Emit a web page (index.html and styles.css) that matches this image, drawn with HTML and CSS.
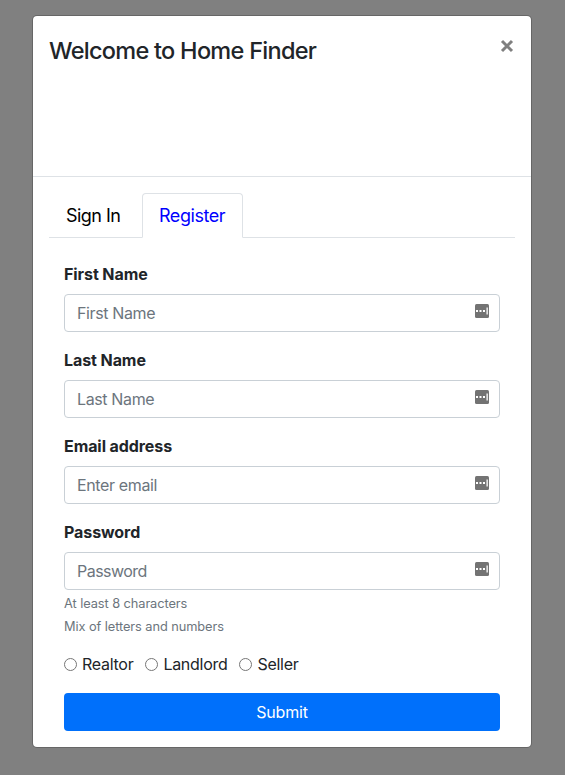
FILE: index.html
```html
<!DOCTYPE html>
<html lang="en">
<head>
<meta charset="utf-8">
<title>Home Finder</title>
<link rel="stylesheet" href="styles.css">
</head>
<body>
<main class="modal">
  <header class="modal-header">
    <h1 class="title">Welcome to Home Finder</h1>
    <button class="close" type="button"><svg width="12" height="12" viewBox="0 0 12 12"><path d="M1 1 11 11M11 1 1 11"/></svg></button>
  </header>
  <section class="modal-body">
    <nav class="tabs"><a class="tab">Sign In</a><a class="tab active">Register</a></nav>
    <form class="form">
      <label class="label" for="first">First Name</label>
      <div class="field"><input id="first" class="input" placeholder="First Name"><svg class="key" viewBox="0 0 14 14"><rect width="14" height="14" rx="1.5"/><path d="M1 6h2v2H1zM4.5 6h2v2h-2zM8 6h2v2H8zM11.5 3.5h1.3v7h-1.3z"/></svg></div>
      <label class="label" for="last">Last Name</label>
      <div class="field"><input id="last" class="input" placeholder="Last Name"><svg class="key" viewBox="0 0 14 14"><rect width="14" height="14" rx="1.5"/><path d="M1 6h2v2H1zM4.5 6h2v2h-2zM8 6h2v2H8zM11.5 3.5h1.3v7h-1.3z"/></svg></div>
      <label class="label" for="email">Email address</label>
      <div class="field"><input id="email" class="input" placeholder="Enter email"><svg class="key" viewBox="0 0 14 14"><rect width="14" height="14" rx="1.5"/><path d="M1 6h2v2H1zM4.5 6h2v2h-2zM8 6h2v2H8zM11.5 3.5h1.3v7h-1.3z"/></svg></div>
      <label class="label" for="pass">Password</label>
      <div class="field last"><input id="pass" class="input" type="password" placeholder="Password"><svg class="key" viewBox="0 0 14 14"><rect width="14" height="14" rx="1.5"/><path d="M1 6h2v2H1zM4.5 6h2v2h-2zM8 6h2v2H8zM11.5 3.5h1.3v7h-1.3z"/></svg></div>
      <small class="hint">At least 8 characters</small>
      <small class="hint">Mix of letters and numbers</small>
      <div class="roles">
        <label class="role"><input class="radio" type="radio" name="role">Realtor</label>
        <label class="role"><input class="radio" type="radio" name="role">Landlord</label>
        <label class="role"><input class="radio" type="radio" name="role">Seller</label>
      </div>
      <button class="submit" type="button">Submit</button>
    </form>
  </section>
</main>
</body>
</html>
```
FILE: styles.css
```css
* { box-sizing: border-box; }
body { display: flow-root; margin: 0; height: 775px; overflow: hidden; background: #808080; color: #212529; font: 16px/24px Inter, sans-serif; }
.modal { width: 500px; height: 733px; margin: 15px 0 0 32px; display: flow-root; background: #fff; background-clip: padding-box; border: 1px solid rgba(0,0,0,.2); border-radius: 5px; }
.modal-header { height: 161px; padding: 16px; display: flex; justify-content: space-between; align-items: flex-start; border-bottom: 1px solid #dee2e6; }
.title { margin: 1px 0 0; font-size: 23.5px; line-height: 36px; font-weight: 500; letter-spacing: -.72px; white-space: nowrap; }
.close { margin: 8px 2px 0 0; padding: 0; border: 0; background: none; line-height: 0; }
.close svg { overflow: visible; }
.close path { stroke: #7f7f7f; stroke-width: 3; fill: none; }
.modal-body { padding: 16px; }
.tabs { display: flex; height: 45px; border-bottom: 1px solid #dee2e6; font-size: 18px; line-height: 27px; letter-spacing: -.45px; }
.tab { height: 45px; padding: 8px 16px; border: 1px solid transparent; border-radius: 4px 4px 0 0; color: #000; white-space: nowrap; }
.tab:first-child { width: 93px; letter-spacing: -.55px; }
.active { width: 101px; color: #00f; background: #fff; border-color: #dee2e6 #dee2e6 #fff; }
.form { padding: 24px 15px 0; }
.label { display: block; margin-bottom: 8px; font-weight: 700; letter-spacing: -.08px; }
.field { position: relative; height: 38px; margin-bottom: 16px; }
.field.last { margin-bottom: 2px; }
.input { width: 100%; height: 38px; padding: 6px 12px; border: 1px solid #c9d0d6; border-radius: 4px; background: #fff; font: inherit; letter-spacing: -.37px; }
.input::placeholder { color: #6c757d; opacity: 1; }
#pass { letter-spacing: -.52px; }
.key { position: absolute; width: 14px; height: 14px; right: 11px; top: 10px; fill: #737373; }
.key path { fill: #fff; }
.hint { display: block; font-size: 12.8px; line-height: 23px; letter-spacing: -.07px; color: #6c757d; }
.roles { display: flex; gap: 12px; margin: 14px 0 17px; height: 24px; }
.role { display: flex; align-items: center; letter-spacing: -.28px; }
.radio { width: 13px; height: 13px; margin: 0 5px 0 0; }
.submit { display: block; width: 100%; height: 38px; padding: 0; border: 0; border-radius: 4px; background: #0070fb; color: #fff; font: inherit; letter-spacing: -.2px; }
```
